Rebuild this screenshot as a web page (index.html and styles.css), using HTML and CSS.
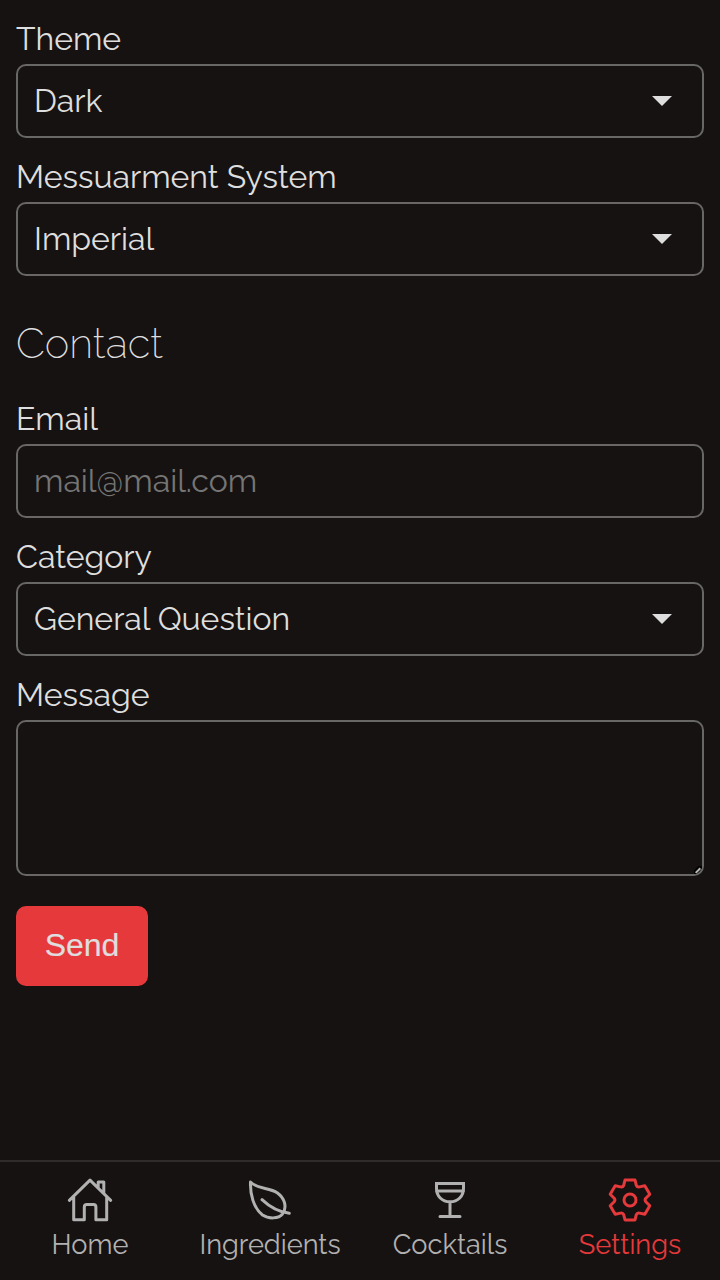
FILE: index.html
```html
<!DOCTYPE html>
<html lang="en">
<head>
<meta charset="utf-8">
<title>Settings</title>
<link rel="stylesheet" href="styles.css">
</head>
<body>
<main class="settings">
  <div class="field">
    <label class="label" for="theme">Theme</label>
    <div class="select"><select class="control" id="theme"><option>Dark</option></select></div>
  </div>
  <div class="field">
    <label class="label" for="system">Messuarment System</label>
    <div class="select"><select class="control" id="system"><option>Imperial</option></select></div>
  </div>
  <h2 class="heading">Contact</h2>
  <div class="field">
    <label class="label" for="email">Email</label>
    <input class="control" id="email" type="email" placeholder="mail@mail.com">
  </div>
  <div class="field">
    <label class="label" for="category">Category</label>
    <div class="select"><select class="control" id="category"><option>General Question</option></select></div>
  </div>
  <div class="field">
    <label class="label" for="message">Message</label>
    <div class="message">
      <textarea class="control area" id="message"></textarea>
      <svg class="grip" viewBox="0 0 8 8"><path class="grip-edge" d="M1.2 6.2 6 1.4"/><path class="grip-line" d="M2.4 6.2 5.6 3"/></svg>
    </div>
  </div>
  <button class="send" type="button">Send</button>
</main>
<nav class="tabs">
  <a class="tab">
    <svg class="icon" viewBox="0 0 48 48"><path d="M3.3 24.3 24 4.2l20.7 20.1M32.2 11V6h5.6v11M7.7 21v22.7h10.6V31q0-2.5 2.5-2.5h6.6q2.5 0 2.5 2.5v12.7h10.8V21"/></svg>
    <span>Home</span>
  </a>
  <a class="tab">
    <svg class="icon" viewBox="0 0 48 48"><path d="M4.5 6C12.5 14 22.5 11 31.5 17C38.5 22 41.5 31 36.5 38C32.5 43 22.5 43 16.5 39C7.5 32 4 18 4.5 6ZM16 23.7C23.7 31 32 36 43.3 37.3"/></svg>
    <span>Ingredients</span>
  </a>
  <a class="tab">
    <svg class="icon glass" viewBox="0 0 48 48"><path d="M10.5 7.5h27v5C37.5 20 32 25.8 24 25.8S10.5 20 10.5 12.5ZM10.5 15h27M24 25.8v14.7M14 40.5h20"/></svg>
    <span>Cocktails</span>
  </a>
  <a class="tab active">
    <svg class="icon" viewBox="-24 -24 48 48"><path d="M-5-20H5L6.3-14.6Q7.2-12.6 9.5-13.1L14.8-14.3 19.8-5.7 15.8-1.8Q14.4 0 15.8 1.8L19.8 5.7 14.8 14.3 9.5 13.1Q7.2 12.6 6.3 14.6L5 20H-5L-6.3 14.6Q-7.2 12.6-9.5 13.1L-14.8 14.3-19.8 5.7-15.8 1.8Q-14.4 0-15.8-1.8L-19.8-5.7-14.8-14.3-9.5-13.1Q-7.2-12.6-6.3-14.6Z"/><circle r="6"/></svg>
    <span>Settings</span>
  </a>
</nav>
</body>
</html>
```
FILE: styles.css
```css
* { box-sizing: border-box; }
body {
  margin: 0;
  height: 1280px;
  display: flex;
  flex-direction: column;
  background: #161211;
  color: #dedede;
  font-family: Raleway, Lato, sans-serif;
  font-size: 32px;
}
.settings { flex: 1; padding: 16px; }
.field { display: flex; flex-direction: column; gap: 3px; margin-bottom: 16px; }
.label { padding-top: 1px; line-height: 44px; }
.select { display: grid; align-items: center; }
.select::after {
  content: "";
  grid-area: 1 / 1;
  justify-self: end;
  margin-right: 32px;
  width: 20px;
  height: 10px;
  background: #dedede;
  clip-path: polygon(0 0, 100% 0, 50% 100%);
  pointer-events: none;
}
.control {
  grid-area: 1 / 1;
  appearance: none;
  display: block;
  width: 100%;
  height: 74px;
  margin: 0;
  padding: 0 16px 2px;
  border: 2px solid #686766;
  border-radius: 10px;
  outline: 0;
  background: transparent;
  color: inherit;
  font: inherit;
}
.control::placeholder { color: #757575; opacity: 1; }
.message { position: relative; }
.area { height: 156px; padding: 16px; resize: none; }
.grip { position: absolute; right: 2px; bottom: 2px; width: 8px; height: 8px; fill: none; stroke-linecap: square; }
.grip-edge { stroke: #000; stroke-width: 4; }
.grip-line { stroke: #b8b8b8; stroke-width: 2; }
.heading { margin: 40px 0 24px; font-size: 41.6px; font-weight: 200; line-height: 56px; }
.send {
  display: block;
  width: 132px;
  height: 80px;
  margin-top: 30px;
  padding: 0 0 2px;
  border: 0;
  border-radius: 10px;
  background: #e6393b;
  color: #dedede;
  font: 32px "Liberation Sans", sans-serif;
  -webkit-text-stroke: 0.2px #dedede;
}
.tabs {
  display: grid;
  grid-template-columns: repeat(4, 1fr);
  height: 120px;
  padding-top: 14px;
  border-top: 2px solid #302c2c;
  color: #b2b1b1;
  font-size: 27.2px;
}
.tab { display: flex; flex-direction: column; align-items: center; gap: 1px; line-height: 38px; }
.icon { width: 48px; height: 48px; fill: none; stroke: currentColor; stroke-width: 3; stroke-linecap: round; stroke-linejoin: round; }
.glass { stroke-linejoin: miter; }
.active { color: #e6393b; }
```
